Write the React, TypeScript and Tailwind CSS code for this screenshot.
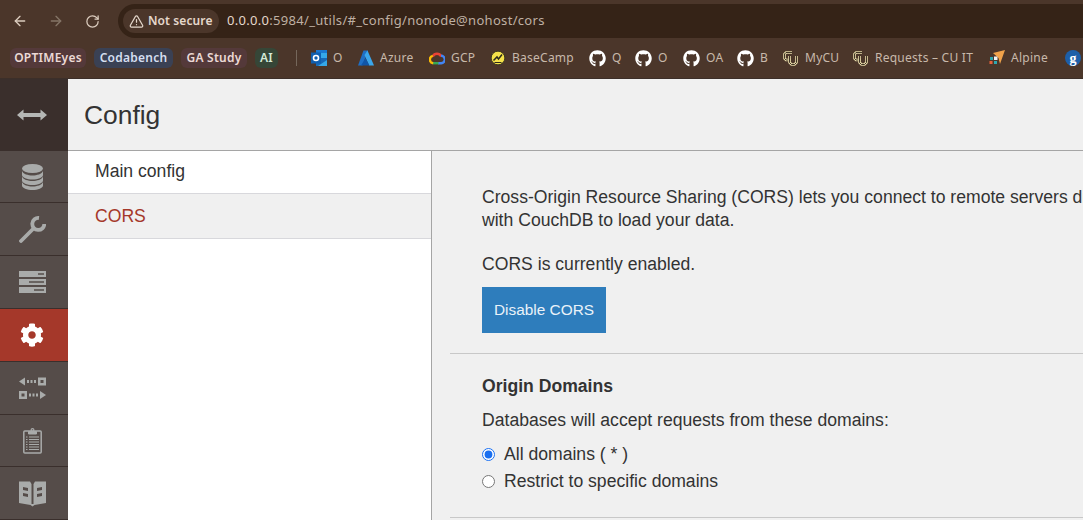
import React from "react";
import { ArrowLeft, ArrowRight, RotateCw, TriangleAlert } from "lucide-react";
import { FaGithub, FaCog } from "react-icons/fa";

const OutlookIcon = () => (
  <svg width="16" height="18" viewBox="0 0 16 18">
    <rect x="5" y="1" width="11" height="7" fill="#1a78d0" />
    <rect x="10" y="4" width="6" height="5" fill="#35a8e8" />
    <path d="M5 9h11v8H5Z" fill="#1769b8" />
    <path d="M7 17l9-6v6Z" fill="#35a8e8" />
    <rect x="0" y="3.500" width="10" height="11" fill="#0f5fb0" />
    <circle cx="5" cy="9" r="2.500" fill="none" stroke="#fff" strokeWidth="1.600" />
  </svg>
);

const AzureIcon = () => (
  <svg width="16" height="16" viewBox="0 0 16 16">
    <path d="M5.500 0.500H10L4.500 15.500H0Z" fill="#1f6fc4" />
    <path d="M9.500 0.500 16 15.500H11L6.500 5Z" fill="#3ba6ea" />
    <path d="M7.500 8 11.500 15.500H3Z" fill="#0f55a8" />
  </svg>
);

const GcpIcon = () => (
  <svg width="16" height="14" viewBox="0 0 16 14">
    <path d="M3.800 5.500a4.600 4.600 0 0 1 8.400 0" fill="none" stroke="#ea4335" strokeWidth="2.400" />
    <path d="M12 4.800a3.700 3.700 0 0 1 .3 7.400H9" fill="none" stroke="#4285f4" strokeWidth="2.400" />
    <path d="M9.500 12.200H4" fill="none" stroke="#34a853" strokeWidth="2.400" />
    <path d="M4.200 12.200a3.700 3.700 0 0 1-.4-7.300" fill="none" stroke="#fbbc05" strokeWidth="2.400" />
  </svg>
);

const BasecampIcon = () => (
  <svg width="16" height="16" viewBox="0 0 16 16">
    <circle cx="8" cy="8" r="6.800" fill="#f5e14a" stroke="#2a2a1c" strokeWidth="0.800" />
    <path d="M3.500 10.500 7 7l1.500 2 3.500-4.500" fill="none" stroke="#2a2a1c" strokeWidth="1.500" />
    <path d="M4.500 12.500h7" stroke="#2a2a1c" strokeWidth="1" />
  </svg>
);

const CuIcon = () => (
  <svg width="16" height="16" viewBox="0 0 16 16" fill="none">
    <path d="M9 2.500H3L1.500 4v4.500L3 10h5" stroke="#e6d9a8" strokeWidth="2.600" />
    <path d="M9 2.500H3L1.500 4v4.500L3 10h5" stroke="#2d2418" strokeWidth="0.900" />
    <path d="M6.500 6v6.500L8.500 14.500h3l2-2V6" stroke="#e6d9a8" strokeWidth="2.600" />
    <path d="M6.500 6v6.500L8.500 14.500h3l2-2V6" stroke="#2d2418" strokeWidth="0.900" />
  </svg>
);

const AlpineIcon = () => (
  <svg width="16" height="16" viewBox="0 0 16 16">
    <path d="M4 3 16 0 11 14 9.500 8Z" fill="#f0a24a" />
    <rect x="1" y="7" width="3" height="3" fill="#2fa8b0" />
    <rect x="5" y="6.500" width="3.500" height="3.500" fill="#f2f2f2" />
    <rect x="0.500" y="11" width="3" height="3" fill="#e8603a" />
    <rect x="5" y="11" width="3" height="3" fill="#2fa8b0" />
  </svg>
);

const bookmarks: { icon: React.ReactNode; label: string; width: string }[] = [
  { icon: <OutlookIcon />, label: "O", width: "w-[47px]" },
  { icon: <AzureIcon />, label: "Azure", width: "w-[71px]" },
  { icon: <GcpIcon />, label: "GCP", width: "w-[61px]" },
  { icon: <BasecampIcon />, label: "BaseCamp", width: "w-[99px]" },
  { icon: <FaGithub size={17} color="#fff" />, label: "Q", width: "w-[46px]" },
  { icon: <FaGithub size={17} color="#fff" />, label: "O", width: "w-[48px]" },
  { icon: <FaGithub size={17} color="#fff" />, label: "OA", width: "w-[54px]" },
  { icon: <FaGithub size={17} color="#fff" />, label: "B", width: "w-[46px]" },
  { icon: <CuIcon />, label: "MyCU", width: "w-[70px]" },
  { icon: <CuIcon />, label: "Requests – CU IT", width: "w-[136px]" },
  { icon: <AlpineIcon />, label: "Alpine", width: "w-[76px]" },
];

const DatabaseIcon = () => (
  <svg width="21" height="26" viewBox="0 0 21 26" fill="#a9abaa">
    <ellipse cx="10.500" cy="4.500" rx="10.500" ry="4.500" />
    <path d="M0 7c1 3 6 4.500 10.500 4.500S20 10 21 7v4c0 2.500-5 4.500-10.500 4.500S0 13.500 0 11Z" />
    <path d="M0 12.500c1 3 6 4.500 10.500 4.500S20 15.500 21 12.500v4c0 2.500-5 4.500-10.500 4.500S0 19 0 16.500Z" />
    <path d="M0 18c1 3 6 4.500 10.500 4.500S20 21 21 18v3.500c0 2.500-5 4.500-10.500 4.500S0 24 0 21.500Z" />
  </svg>
);

const WrenchIcon = () => (
  <svg width="27" height="27" viewBox="0 0 27 27" fill="none" stroke="#a9abaa" strokeWidth="3.800">
    <path d="M2 25 14 13" strokeLinecap="round" />
    <path d="M20 2A6 6 0 1 0 25.300 8" />
  </svg>
);

const ServersIcon = () => (
  <svg width="27" height="22" viewBox="0 0 27 22" fill="#a9abaa">
    <path fillRule="evenodd" d="M0 0h27v6H0ZM19 2.200v1.600h6V2.200Z" />
    <path fillRule="evenodd" d="M0 8h27v6H0ZM10 10.200v1.600h15v-1.600Z" />
    <path fillRule="evenodd" d="M0 16h27v6H0ZM15 18.200v1.600h10v-1.600Z" />
  </svg>
);

const ReplicationIcon = () => (
  <svg width="27" height="23" viewBox="0 0 27 23" fill="#a9abaa">
    <path d="M0 4.500 6 0.500v8Z" />
    <path d="M8 3h2v3H8ZM11.500 3h2v3h-2ZM15 3h2v3h-2Z" />
    <path fillRule="evenodd" d="M19 0.500h8v8h-8ZM21.500 3v3h3V3Z" />
    <path fillRule="evenodd" d="M0 14h8v8H0ZM2.500 16.500v3h3v-3Z" />
    <path d="M10 16.500h2v3h-2ZM13.500 16.500h2v3h-2ZM17 16.500h2v3h-2Z" />
    <path d="M21 14l6 4-6 4Z" />
  </svg>
);

const ClipboardIcon = () => (
  <svg width="19" height="26" viewBox="0 0 19 26" fill="none" stroke="#a9abaa">
    <rect x="0.800" y="3" width="17.400" height="22" rx="1" strokeWidth="1.500" />
    <path d="M5.500 3.500h8v2.500h-8Z" fill="#a9abaa" />
    <circle cx="9.500" cy="2" r="1.400" strokeWidth="1.200" />
    <path d="M6 9h10M6 11.500h10M6 14h10M6 16.500h10M6 19h10M6 21.500h10" strokeWidth="1.100" />
    <path d="M3 9h1.500M3 11.500h1.500M3 14h1.500M3 16.500h1.500M3 19h1.500M3 21.500h1.500" strokeWidth="1.100" />
  </svg>
);

const BookIcon = () => (
  <svg width="27" height="27" viewBox="0 0 27 27" fill="#a9abaa">
    <path
      fillRule="evenodd"
      d="M0 1.500 11 1.500l1.500 2.500V24h2V4L16 1.500 27 1.500V23l-11.500 2-2 1.500-2-1.500L0 23ZM4 7v3l5 1V8Zm0 6v3l5 1v-3Zm19-6-5 1v3l5-1Zm0 6-5 1v3l5-1Z"
    />
  </svg>
);

const navItems: { icon: React.ReactNode; active?: boolean; height: string }[] = [
  { icon: <DatabaseIcon />, height: "h-[52px]" },
  { icon: <WrenchIcon />, height: "h-[53px]" },
  { icon: <ServersIcon />, height: "h-[53px]" },
  { icon: <FaCog size={24} color="#fff" />, active: true, height: "h-[53px]" },
  { icon: <ReplicationIcon />, height: "h-[53px]" },
  { icon: <ClipboardIcon />, height: "h-[52px]" },
  { icon: <BookIcon />, height: "h-[53px]" },
];

const App: React.FC = () => {
  return (
    <div className="w-[1083px] h-[520px] overflow-hidden flex flex-col bg-white font-['Liberation_Sans',Arial,sans-serif]">
      {/* browser chrome */}
      <div className="h-[79px] shrink-0 bg-[#4b362a] border-b border-[#3c2f29] font-['Noto_Sans',sans-serif]">
        <div className="h-[42px] pt-1 flex items-start">
          <div className="w-[118px] h-[34px] pl-3 flex items-center shrink-0">
            <ArrowLeft size={16} color="#dccdbf" />
            <ArrowRight size={16} color="#857567" className="ml-5" />
            <RotateCw size={15} color="#dccdbf" className="ml-[21px]" />
          </div>
          <div className="flex-1 h-[34px] bg-[#352317] rounded-l-[17px] flex items-center pl-[5px]">
            <div className="h-[24px] w-[96px] pl-[6px] rounded-full bg-[#4b362a] flex items-center gap-[4px] text-[12px] font-semibold text-[#e5d8cc] tracking-[0.1px] whitespace-nowrap">
              <TriangleAlert size={15} color="#e5d8cc" />
              Not secure
            </div>
            <span className="ml-2 text-[13px] tracking-[0.3px] text-[#e5d8cc]">
              0.0.0.0<span className="text-[#bfb0a3]">:5984/_utils/#_config/nonode@nohost/cors</span>
            </span>
          </div>
        </div>
        <div className="h-[32px] pl-[10px] flex items-center text-[12px] tracking-[0.25px] text-[#c8b9ab] whitespace-nowrap overflow-hidden">
          <span className="h-5 w-[76px] shrink-0 justify-center mr-2 rounded-md bg-[#54393a] font-semibold text-[#ecd9d6] flex items-center">OPTIMEyes</span>
          <span className="h-5 w-[79px] shrink-0 justify-center mr-2 rounded-md bg-[#3a4154] font-semibold text-[#d5dff0] flex items-center">Codabench</span>
          <span className="h-5 w-[66px] shrink-0 justify-center mr-2 rounded-md bg-[#54393a] font-semibold text-[#ecd9d6] flex items-center">GA Study</span>
          <span className="h-5 w-[23px] shrink-0 justify-center rounded-md bg-[#364637] font-semibold text-[#d5ebd8] flex items-center">AI</span>
          <span className="w-px h-4 shrink-0 bg-[#75675b] ml-[18px] mr-[14px]" />
          {bookmarks.map((b, i) => (
            <span key={i} className={`flex items-center gap-[6px] shrink-0 ${b.width}`}>
              {b.icon}
              {b.label}
            </span>
          ))}
          <span className="w-[16px] h-[16px] rounded-full bg-[#1d5fa8] text-white text-[14px] font-bold flex items-center justify-center shrink-0 font-['Liberation_Serif',serif]">
            g
          </span>
        </div>
      </div>

      <div className="flex-1 flex min-h-0">
        {/* icon rail */}
        <div className="w-[68px] shrink-0 flex flex-col bg-[#554c49]">
          <div className="h-[72px] shrink-0 bg-[#3a2f2c] flex items-center justify-center pr-[4px]">
            <svg width="30" height="12" viewBox="0 0 30 12" fill="#b5b7b5">
              <path d="M0 6 6.500 0.500V4h17V0.500L30 6l-6.500 5.500V8h-17v3.500Z" />
            </svg>
          </div>
          {navItems.map((item, i) => (
            <div
              key={i}
              className={`${item.height} shrink-0 flex items-center justify-center pr-[4px] border-b border-[#3a2f2c] ${item.active ? "bg-[#a5382a]" : ""}`}
            >
              {item.icon}
            </div>
          ))}
        </div>

        <div className="flex-1 flex flex-col min-w-0">
          <div className="h-[72px] shrink-0 bg-[#f0f0f0] border-b border-[#a5a5a5] flex items-center pl-4 pt-[3px] text-[26.400px] text-[#333]">
            Config
          </div>
          <div className="flex-1 flex min-h-0">
            <div className="w-[364px] shrink-0 bg-white border-r border-[#a5a5a5] text-[17.600px]">
              <div className="h-[43px] pl-[27px] pb-[1px] flex items-center text-[#333] border-b border-[#d8d8dc]">Main config</div>
              <div className="h-[45px] pl-[27px] pt-[1px] flex items-center text-[#a5382a] bg-[#f0f0f0] border-b border-[#d8d8dc]">CORS</div>
            </div>
            <div className="flex-1 min-w-0 overflow-hidden bg-[#f0f0f0] text-[17.600px] leading-[23px] text-[#333] pl-[18px]">
              <div className="pl-8 pt-[35px] pb-5 border-b border-[#c8c8c8] w-[700px]">
                <p className="whitespace-nowrap">
                  Cross-Origin Resource Sharing (CORS) lets you connect to remote servers directly
                  <br />
                  with CouchDB to load your data.
                </p>
                <p className="mt-[21px]">CORS is currently enabled.</p>
                <button className="mt-[11px] block w-[124px] h-[46px] pb-[1px] bg-[#2e7dbc] text-[#e9f2f9] text-[15.400px]">Disable CORS</button>
              </div>
              <div className="pl-8 pt-[21px] border-b border-[#c8c8c8] w-[700px] h-[164px]">
                <h3 className="font-bold">Origin Domains</h3>
                <p className="mt-[11px]">Databases will accept requests from these domains:</p>
                <label className="mt-[11px] flex items-center gap-[9px]">
                  <input type="radio" name="origin" defaultChecked className="m-0 w-[13px] h-[13px] accent-[#1a6ff0]" />
                  All domains ( * )
                </label>
                <label className="mt-[4px] flex items-center gap-[9px]">
                  <input type="radio" name="origin" className="m-0 w-[13px] h-[13px]" />
                  Restrict to specific domains
                </label>
              </div>
            </div>
          </div>
        </div>
      </div>
    </div>
  );
};

export default App;
